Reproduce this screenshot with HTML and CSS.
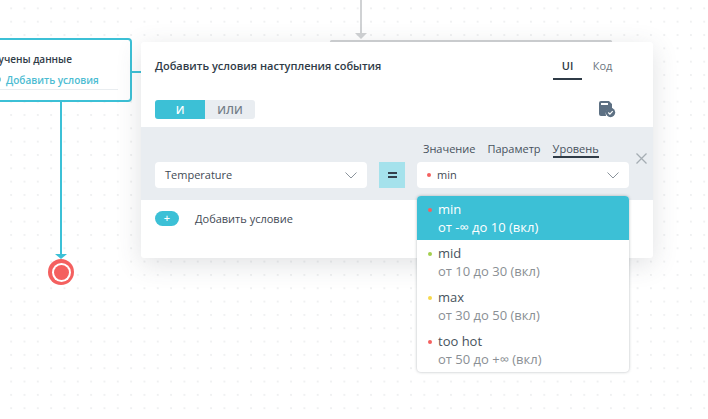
FILE: index.html
```html
<!DOCTYPE html>
<html lang="ru">
<head>
<meta charset="utf-8">
<title>Условия</title>
<link rel="stylesheet" href="styles.css">
</head>
<body>
<div class="canvas">
  <div class="wire-in"></div>
  <div class="arrow-in"></div>
  <div class="bar-in"></div>

  <div class="node">
    <div class="node-title">Получены данные</div>
    <div class="node-link"><span class="node-dot"></span>Добавить условия</div>
  </div>
  <div class="wire-h"></div>
  <div class="wire-v"></div>
  <div class="arrow-out"></div>
  <div class="end"><div class="end-inner"></div></div>

  <section class="panel">
    <header class="head">
      <div class="title">Добавить условия наступления события</div>
      <nav class="tabs">
        <span class="tab tab-on">UI</span>
        <span class="tab">Код</span>
      </nav>
    </header>
    <div class="tools">
      <div class="toggle"><span class="tg tg-on">И</span><span class="tg">ИЛИ</span></div>
      <svg class="save" width="17" height="17" viewBox="0 0 17 17">
        <path d="M2 0h8l3 3v4.500a5.500 5.500 0 0 0-6 7.500H2a2 2 0 0 1-2-2V2a2 2 0 0 1 2-2z" fill="#5d7083"/>
        <rect x="2" y="2" width="7" height="2" fill="#fff"/>
        <circle cx="11.500" cy="11.500" r="4.700" fill="#5d7083"/>
        <path d="M9.300 11.500l1.600 1.600 2.800-2.900" fill="none" stroke="#fff" stroke-width="1.200"/>
      </svg>
    </div>
    <div class="band">
      <div class="field-row">
        <div class="select select-a"><span class="sel-text">Temperature</span>
          <svg class="chev" width="12" height="7" viewBox="0 0 12 7"><path d="M.5.5l5.500 5.500L11.500.5" fill="none" stroke="#8b949c" stroke-width="1"/></svg>
        </div>
        <div class="eq"><span class="eq-l"></span><span class="eq-l"></span></div>
        <div class="col">
          <div class="modes">
            <span class="mode">Значение</span>
            <span class="mode">Параметр</span>
            <span class="mode mode-on">Уровень</span>
          </div>
          <div class="select select-b"><span class="sel-text"><i class="dot red"></i>min</span>
            <svg class="chev" width="12" height="7" viewBox="0 0 12 7"><path d="M.5.5l5.500 5.500L11.500.5" fill="none" stroke="#8b949c" stroke-width="1"/></svg>
          </div>
        </div>
        <svg class="close" width="13" height="13" viewBox="0 0 13 13"><path d="M1.500 1.500l10 10M11.500 1.500l-10 10" stroke="#a5adb3" stroke-width="1.300" fill="none"/></svg>
      </div>
    </div>
    <div class="add">
      <span class="plus">+</span>
      <span class="add-text">Добавить условие</span>
    </div>
  </section>

  <ul class="menu">
    <li class="item item-on"><div class="name"><i class="dot red"></i>min</div><div class="range">от -∞ до 10 (вкл)</div></li>
    <li class="item"><div class="name"><i class="dot green"></i>mid</div><div class="range">от 10 до 30 (вкл)</div></li>
    <li class="item"><div class="name"><i class="dot yellow"></i>max</div><div class="range">от 30 до 50 (вкл)</div></li>
    <li class="item"><div class="name"><i class="dot red"></i>too hot</div><div class="range">от 50 до +∞ (вкл)</div></li>
  </ul>
</div>
</body>
</html>
```
FILE: styles.css
```css
* { box-sizing: border-box; }
html, body { margin: 0; padding: 0; }
body { width: 708px; height: 419px; overflow: hidden; background: #fff; font-family: "Open Sans", "Noto Sans", sans-serif; color: #2f3b47; }
.canvas {
  position: relative; width: 708px; height: 419px; overflow: hidden;
  background-image: radial-gradient(circle at center, #cfd2d5 0, #cfd2d5 .4px, transparent .8px);
  background-size: 13.333px 13.333px;
  background-position: 4.500px 1.700px;
}
.wire-in { position: absolute; left: 360px; top: 0; width: 2px; height: 33px; background: #d0d2d4; }
.arrow-in { position: absolute; left: 355px; top: 33px; border-style: solid; border-width: 6px 6px 0; border-color: #d0d2d4 transparent transparent; }
.bar-in { position: absolute; left: 330px; top: 40px; width: 282px; height: 3px; background: #d0d2d4; border-radius: 2px; }

.node { position: absolute; left: -66px; top: 38px; width: 198px; height: 64px; border: 2px solid #3cc0d6; border-radius: 4px; background: #fff; padding: 12px 0 0 43px; }
.node-title { font-size: 10px; font-weight: 600; line-height: 14px; color: #2f3b47; }
.node-link { position: relative; width: 129px; margin-top: 7px; margin-left: 10px; padding-bottom: 2px; padding-left: 17px; border-bottom: 1px solid #e9edf0; font-size: 10px; font-weight: 600; line-height: 14px; color: #4cbcd2; }
.node-dot { position: absolute; left: 5px; top: 3px; width: 7px; height: 7px; border: 1.500px solid #4cbcd2; border-radius: 50%; }
.wire-h { position: absolute; left: 131px; top: 71px; width: 10px; height: 2px; background: #3cc0d6; }
.wire-v { position: absolute; left: 60px; top: 101px; width: 2px; height: 154px; background: #3cc0d6; }
.arrow-out { position: absolute; left: 55px; top: 254px; border-style: solid; border-width: 5px 6px 0; border-color: #3cc0d6 transparent transparent; }
.end { position: absolute; left: 48px; top: 259px; width: 26px; height: 26px; border-radius: 50%; background: #f4605f; display: flex; align-items: center; justify-content: center; }
.end-inner { width: 15px; height: 15px; border-radius: 50%; background: #f4605f; box-shadow: 0 0 0 2px #fff; }

.panel { position: absolute; left: 141px; top: 42px; width: 512px; height: 216px; background: #fff; border-radius: 3px; box-shadow: 0 6px 26px rgba(60, 70, 80, .16); }
.head { display: flex; justify-content: space-between; height: 38px; padding: 0 40px 0 14px; align-items: flex-start; }
.title { font-size: 11px; font-weight: 600; line-height: 16px; margin-top: 16px; color: #2f3b47; }
.tabs { display: flex; margin-top: 14px; }
.tab { font-size: 11px; font-weight: 600; line-height: 16px; height: 24px; padding: 2px 0 0; color: #6c7680; width: 29px; text-align: center; }
.tab + .tab { margin-left: 10px; width: 21px; font-weight: 400; }
.tab-on { color: #2f3b47; border-bottom: 2px solid #2f3b47; }
.tools { display: flex; justify-content: space-between; align-items: center; height: 47px; padding: 0 37px 0 14px; }
.toggle { display: flex; width: 100px; height: 19px; border-radius: 3px; overflow: hidden; background: #e9edf1; margin-top: 11px; }
.tg { flex: 1; text-align: center; font-size: 11px; font-weight: 600; line-height: 19px; color: #737d87; }
.tg-on { background: #3cc0d6; color: #fff; }
.save { margin: 12px 0 0; }
.band { height: 73px; background: #e9edf1; padding: 0 0 0 14px; }
.field-row { display: flex; align-items: flex-end; height: 61px; }
.select { display: flex; justify-content: space-between; align-items: center; height: 26px; width: 212px; background: #fff; border-radius: 4px; padding: 0 10px; font-size: 11px; color: #3f4a55; }
.sel-text { padding-bottom: 2px; }
.eq { width: 26px; height: 26px; margin: 0 12px; background: #a5e2ec; display: flex; flex-direction: column; align-items: center; justify-content: center; gap: 2px; }
.eq-l { width: 9px; height: 2px; background: #34404c; }
.col { display: flex; flex-direction: column; }
.modes { display: flex; gap: 12px; padding-left: 6px; height: 35px; }
.mode { font-size: 11px; line-height: 16px; color: #47525d; margin-top: 14px; height: 17px; }
.mode-on { border-bottom: 2px solid #2f3b47; }
.close { margin: 0 0 23px 6px; }
.dot { display: inline-block; width: 4px; height: 4px; border-radius: 50%; margin-right: 6px; vertical-align: 2px; }
.red { background: #f4605f; }
.green { background: #a3cf4e; }
.yellow { background: #f6d84c; }
.add { display: flex; align-items: center; height: 37px; padding: 0 0 0 14px; }
.plus { width: 24px; height: 15px; border-radius: 8px; background: #3cc0d6; color: #fff; font-size: 11px; line-height: 14px; text-align: center; font-weight: 600; }
.add-text { margin-left: 16px; font-size: 11px; color: #3f4a55; }

.menu { position: absolute; left: 417px; top: 196px; width: 212px; height: 176px; margin: 0; padding: 0; list-style: none; background: #fff; border-radius: 4px; overflow: hidden; box-shadow: 0 0 3px rgba(40, 50, 60, .35); }
.item { height: 44px; padding: 4px 0 0 11px; }
.name { font-size: 13px; line-height: 18px; color: #47525d; }
.range { font-size: 13px; line-height: 18px; color: #8a8f94; padding-left: 10px; }
.item-on { background: #3cc0d6; }
.item-on .name, .item-on .range { color: #fff; }
.item-on .range { font-weight: 500; }
```
